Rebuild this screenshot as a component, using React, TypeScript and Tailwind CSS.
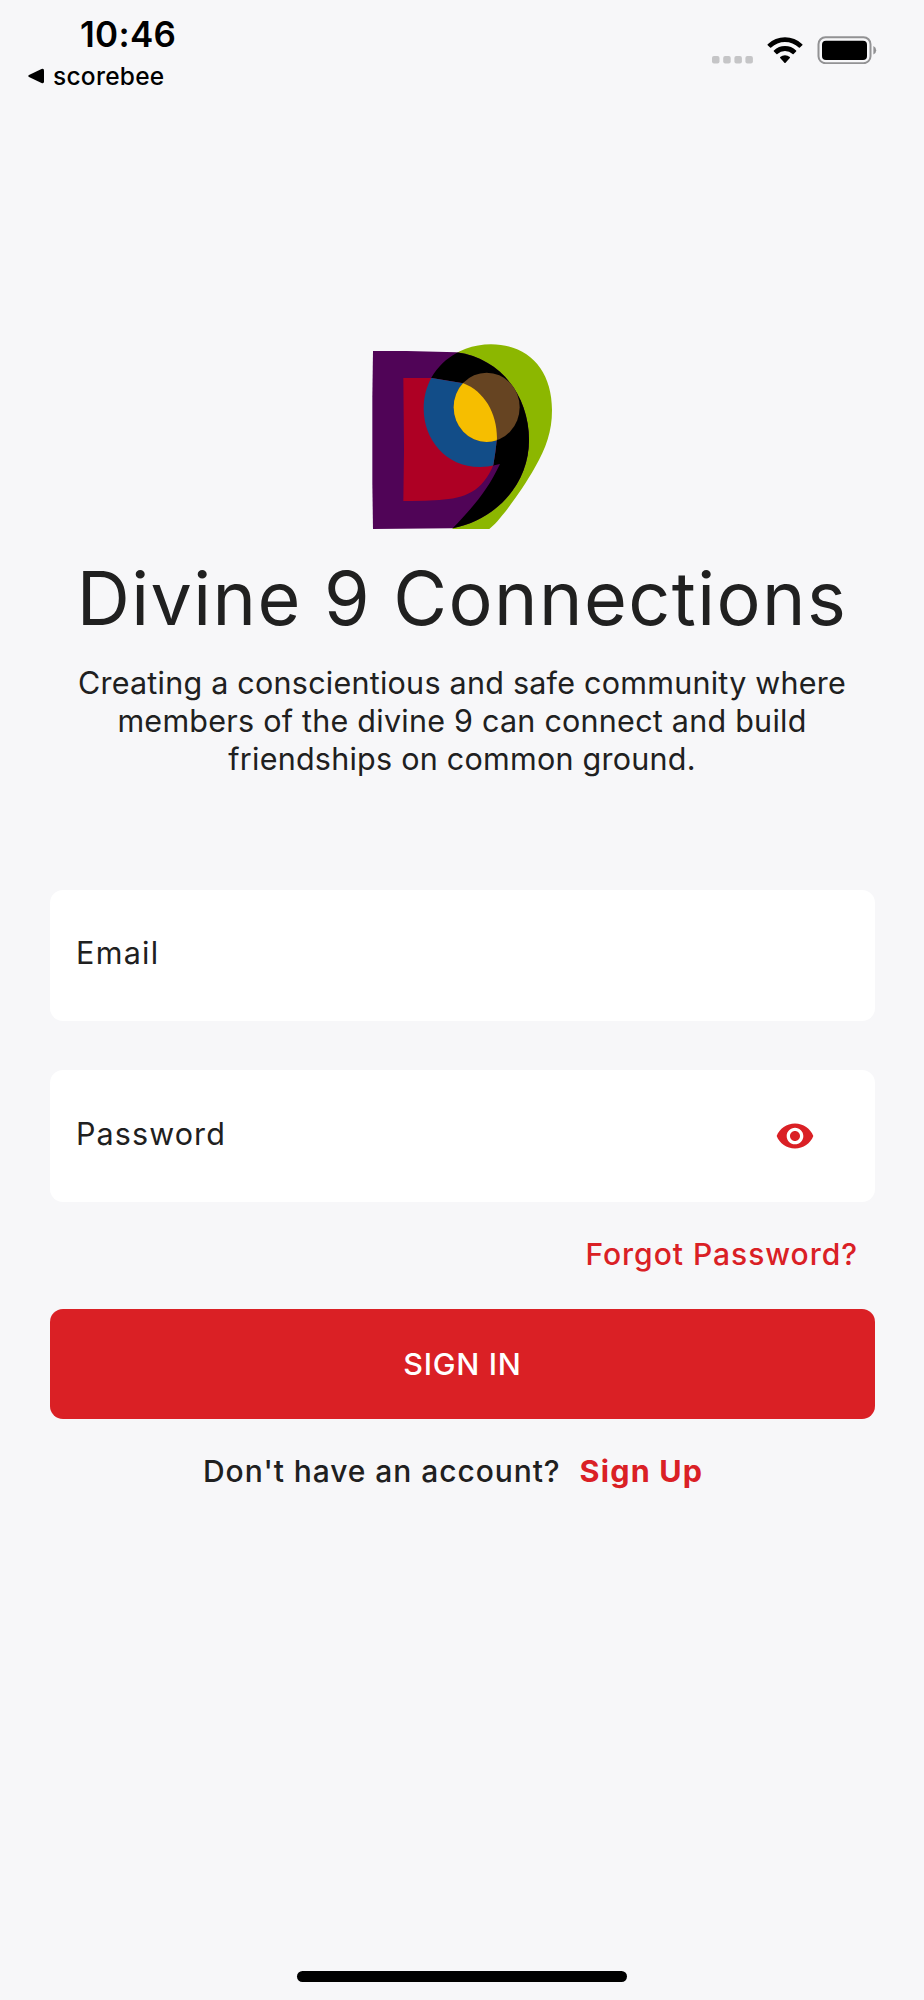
import { useState } from 'react'
import { MdVisibility, MdVisibilityOff } from 'react-icons/md'

export default function App() {
  const [showPassword, setShowPassword] = useState(false)

  return (
    <main className="flex h-[2000px] w-[924px] flex-col overflow-hidden bg-[#f7f7f9] font-['Inter','Liberation_Sans',sans-serif] text-[#202020]">

      <StatusBar />

      {/* Brand */}

      <header className="mt-[234px] flex flex-col items-center">
        <Logo />

        <h1 className="mt-[29px] h-20 whitespace-nowrap text-[73.6px] leading-[80px] tracking-[1.45px]">
          Divine 9 Connections
        </h1>

        <p className="mt-[25px] text-center text-[30.5px] leading-[38px] tracking-[0.24px]">
          Creating a conscientious and safe community where
          <br />
          members of the divine 9 can connect and build
          <br />
          friendships on common ground.
        </p>
      </header>

      {/* Form */}

      <form className="ml-[50px] mr-[49px] mt-[112px] flex flex-col">
        <label className="flex h-[131px] items-start rounded-[13px] bg-white px-[26px] pt-[44px]">
          <span className="text-[30.5px] leading-[38px] tracking-[1.3px]">Email</span>
        </label>

        <label className="mt-[49px] flex h-[132px] items-start justify-between rounded-[13px] bg-white pl-[26px] pr-[60px] pt-[45px]">
          <span className="text-[30.5px] leading-[38px] tracking-[1.1px]">Password</span>
          <button
            type="button"
            className="mt-[1px] text-[#da2025]"
            onClick={() => setShowPassword(!showPassword)}
          >
            {showPassword ? <MdVisibilityOff size={40} /> : <MdVisibility size={40} />}
          </button>
        </label>

        <a className="mr-[17px] mt-[33px] self-end text-[30px] font-medium leading-[38px] tracking-[0.97px] text-[#da2025]">
          Forgot Password?
        </a>

        <button
          type="button"
          className="mt-[36px] flex h-[110px] items-center justify-center rounded-[13px] bg-[#da2025] text-[30.5px] font-medium leading-[38px] tracking-[0.7px] text-white"
        >
          SIGN IN
        </button>
      </form>

      <p className="ml-[203px] mt-[33px] flex gap-[19px] whitespace-nowrap text-[30px] leading-[38px]">
        <span className="font-medium tracking-[0.93px]">Don't have an account?</span>
        <a className="text-[30.5px] font-bold tracking-[1.2px] text-[#da2025]">Sign Up</a>
      </p>

      {/* Home indicator */}

      <div className="mb-[18px] mt-auto h-[11px] w-[330px] self-center rounded-full bg-black" />

    </main>
  )
}

function StatusBar() {
  return (
    <div className="flex h-[110px] justify-between text-black">
      <div className="pl-[28px] pt-[14px]">
        <div className="pl-[52px] text-[35px] font-semibold leading-[40px] tracking-[0.3px]">10:46</div>
        <div className="mt-[7px] flex items-center">
          <svg width="17" height="16" viewBox="0 0 17 16">
            <path d="M1 7 L13.5 1 Q16 0 16 2.5 V13.5 Q16 16 13.5 15 L1 9 Q-0.5 8 1 7Z" />
          </svg>
          <span className="ml-[8px] text-[24.5px] font-medium leading-[30px] tracking-[0.25px]">scorebee</span>
        </div>
      </div>

      <div className="flex pr-[47px] pt-[36px]">
        <svg width="42" height="28" viewBox="0 0 42 28" fill="#c5c5c7">
          <rect x="0" y="20" width="7.5" height="7.5" rx="2" />
          <rect x="11.2" y="20" width="7.5" height="7.5" rx="2" />
          <rect x="22.4" y="20" width="7.5" height="7.5" rx="2" />
          <rect x="33.4" y="20" width="7.5" height="7.5" rx="2" />
        </svg>
        <svg className="ml-[13px]" width="36" height="28" viewBox="0 0 36 28">
          <path d="M0.7 8.2 A25 25 0 0 1 35.3 8.2 Q35.8 8.7 35.3 9.2 L32.9 11.6 Q32.4 12.1 31.8 11.6 A20 20 0 0 0 4.2 11.6 Q3.6 12.1 3.1 11.6 L0.7 9.2 Q0.2 8.7 0.7 8.2Z" />
          <path d="M6.9 14.4 A16.3 16.3 0 0 1 29.1 14.4 Q29.6 14.9 29.1 15.4 L26.6 17.9 Q26.1 18.4 25.6 17.9 A11.3 11.3 0 0 0 10.4 17.9 Q9.9 18.4 9.4 17.9 L6.9 15.4 Q6.4 14.9 6.9 14.4Z" />
          <path d="M13.2 21 A7.3 7.3 0 0 1 22.8 21 Q23.2 21.5 22.8 22 L18.6 26.8 Q18 27.4 17.4 26.8 L13.2 22 Q12.8 21.5 13.2 21Z" />
        </svg>
        <svg className="ml-[14px]" width="60" height="28" viewBox="0 0 60 28">
          <rect x="1.5" y="1.2" width="52" height="26" rx="7" fill="none" stroke="#929294" strokeWidth="2" />
          <rect x="5" y="4.7" width="45" height="19.3" rx="4" />
          <path d="M56.4 10 Q59.2 11.2 59.2 14.2 T56.4 18.6Z" fill="#929294" />
        </svg>
      </div>
    </div>
  )
}

// "D" and "9" laid over each other, with a flat colour for every overlap
function Logo() {
  const outerD = 'M69 63 H170 L320 67 C455 86 537 200 537 330 C537 455 447 566 308 595 L69 597 L67 460 V200 Z'
  const innerD = 'M160 144 H245 L340 160 C402 184 441 248 441 325 Q437 365 430 405 C398 484 345 505 268 510 Q215 514 160 513 L162 360 Z'
  const nine =
    'M308 597 H418 C445 577 510 492 555 412 C588 354 606 305 606 240 C606 120 535 43 423 43 C318 43 221 118 221 236 C221 325 285 411 390 411 Q415 411 450 402 C414 478 375 525 308 595 Z'

  return (
    <svg width="180" height="186" viewBox="66 42 540 558">
      <clipPath id="outer-d">
        <path d={outerD} />
      </clipPath>
      <clipPath id="inner-d">
        <path d={innerD} />
      </clipPath>
      <path d={nine} fill="#8cb700" />
      <path d={outerD} fill="#500457" />
      <path d={nine} fill="#000000" clipPath="url(#outer-d)" />
      <path d={innerD} fill="#ae0024" />
      <path d={nine} fill="#124d88" clipPath="url(#inner-d)" />
      <ellipse cx="410" cy="232" rx="99" ry="104" fill="#664422" />
      <ellipse cx="410" cy="232" rx="99" ry="104" fill="#f6be00" clipPath="url(#inner-d)" />
    </svg>
  )
}
